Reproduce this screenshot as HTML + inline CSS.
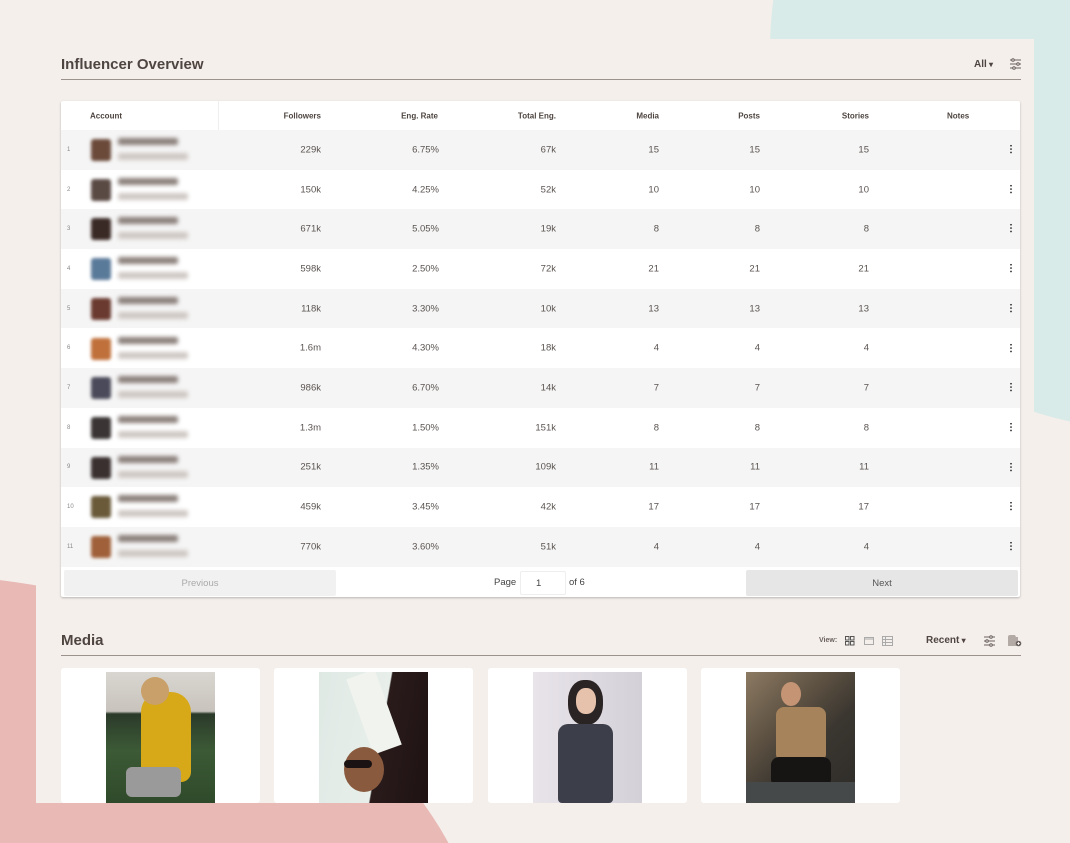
<!DOCTYPE html>
<html style="width:1070px;height:843px;overflow:hidden"><head><meta charset="utf-8"><style>
*{box-sizing:border-box;margin:0;padding:0}
body{width:1070px;height:843px;overflow:hidden;position:relative;background:#f4efeb;font-family:"Liberation Sans",sans-serif;color:#4a4340}
.bg{position:absolute;left:0;top:0;width:1070px;height:843px;overflow:hidden}
.teal{position:absolute;left:770px;top:-330px;width:760px;height:760px;border-radius:50%;background:#d9ebe8}
.pink{position:absolute;left:-690px;top:574px;width:1180px;height:852px;border-radius:50%;background:#e8b9b5}
.panel{position:absolute;left:36px;top:39px;width:998px;height:764px;background:#f4efeb}
h2{position:absolute;font-size:15px;font-weight:bold;color:#4e4541}
.rule{position:absolute;height:1px;background:#9b928d}
.table{position:absolute;left:61px;top:101px;width:959px;height:496px;background:#fff;box-shadow:0 1px 2px rgba(0,0,0,.25);border-radius:2px;overflow:hidden}
.hdr{position:absolute;top:0;left:0;width:959px;height:29px;font-size:8px;font-weight:bold;color:#4e4541}
.hdr span,.row span{position:absolute;top:50%;transform:translateY(-50%)}
.row{position:absolute;left:0;width:959px;height:39.7px;font-size:9.5px;color:#5a5350}
.row.g{background:#f5f5f5}
.r{text-align:right}
.num{font-size:6px;color:#888;left:6px}
.av{position:absolute;left:30px;top:9px;width:20px;height:22px;border-radius:3px;filter:blur(1.5px)}
.nm{position:absolute;left:57px;top:8px;width:60px;height:7px;background:#8a7f7a;filter:blur(2px);border-radius:2px}
.sb{position:absolute;left:57px;top:23px;width:70px;height:7px;background:#cfc8c4;filter:blur(2px);border-radius:2px}
.dots{position:absolute;left:949px;top:14px;width:2px;height:10px;background:radial-gradient(circle,#555 0.9px,transparent 1px) 0 0/2px 3.4px}
.pag{position:absolute;top:467px;left:0;width:959px;height:29px;font-size:9.5px}
.btn{position:absolute;top:2px;height:26px;border-radius:2px;display:flex;align-items:center;justify-content:center}
.card{position:absolute;top:668px;width:199px;height:135px;background:#fff;border-radius:3px;overflow:hidden}
.img{position:absolute;left:45px;top:4px;width:109px;height:131px;overflow:hidden}
</style></head><body>
<div class="bg"><div class="teal"></div><div class="pink"></div></div>
<div class="panel"></div>
<h2 style="left:61px;top:56px">Influencer Overview</h2>
<div style="position:absolute;left:974px;top:59px;font-size:10px;font-weight:bold;color:#4e4541">All<span style="font-size:8px"> ▾</span></div>
<svg style="position:absolute;left:1009px;top:58px" width="13" height="12" viewBox="0 0 13 12" stroke="#6a615d" fill="none"><path d="M1 2h11M1 6h11M1 10h11"/><circle cx="4" cy="2" r="1.3" fill="#f4efeb"/><circle cx="9" cy="6" r="1.3" fill="#f4efeb"/><circle cx="5" cy="10" r="1.3" fill="#f4efeb"/></svg>
<div class="rule" style="left:61px;top:79px;width:960px"></div>
<div class="table">
<div class="hdr"><span style="left:29px">Account</span><span style="left:157px;top:0;height:29px;width:1px;background:#eee;transform:none"></span>
<span class="r" style="right:699px">Followers</span><span class="r" style="right:582px">Eng. Rate</span><span class="r" style="right:464px">Total Eng.</span><span class="r" style="right:361px">Media</span><span class="r" style="right:260px">Posts</span><span class="r" style="right:151px">Stories</span><span style="left:886px">Notes</span></div>
<div id="rows"></div>
<div class="pag"><div class="btn" style="left:3px;width:272px;background:#f1f1f1;color:#aaa">Previous</div>
<span style="position:absolute;left:433px;top:9px;color:#444">Page</span>
<div style="position:absolute;left:459px;top:3px;width:46px;height:24px;border:1px solid #eee;border-radius:2px;font-size:9.5px;padding:6px 0 0 15px;color:#444">1</div>
<span style="position:absolute;left:508px;top:9px;color:#444">of 6</span>
<div class="btn" style="left:685px;width:272px;background:#e6e6e6;color:#555">Next</div></div>
</div>
<h2 style="left:61px;top:632px">Media</h2>
<div style="position:absolute;left:819px;top:637px;font-size:7px;font-weight:bold;color:#6a615d">View:</div>
<svg style="position:absolute;left:845px;top:636px" width="50" height="10" viewBox="0 0 50 10" fill="none"><g stroke="#555"><rect x="0.5" y="0.5" width="3.5" height="3.5"/><rect x="5.5" y="0.5" width="3.5" height="3.5"/><rect x="0.5" y="5.5" width="3.5" height="3.5"/><rect x="5.5" y="5.5" width="3.5" height="3.5"/></g><g stroke="#aaa"><rect x="19.5" y="1.5" width="9" height="7"/><path d="M19 3h10"/><rect x="37.5" y="0.5" width="10" height="9"/><path d="M37.5 3.5h10M37.5 6.5h10M40.5 0.5v9"/></g></svg>
<div style="position:absolute;left:926px;top:635px;font-size:10px;font-weight:bold;color:#4e4541">Recent<span style="font-size:8px"> ▾</span></div>
<svg style="position:absolute;left:983px;top:635px" width="13" height="12" viewBox="0 0 13 12" stroke="#6a615d" fill="none"><path d="M1 2h11M1 6h11M1 10h11"/><circle cx="8" cy="2" r="1.3" fill="#f4efeb"/><circle cx="4" cy="6" r="1.3" fill="#f4efeb"/><circle cx="8" cy="10" r="1.3" fill="#f4efeb"/></svg>
<svg style="position:absolute;left:1007px;top:634px" width="15" height="13" viewBox="0 0 15 13"><path d="M1 3q0-2 2-2h5l1 2h2v9H1z" fill="#b3aaa5"/><circle cx="11.5" cy="9.5" r="2.8" fill="#6a615d"/><path d="M10 9.5h3M11.5 8v3" stroke="#fff" stroke-width=".8"/></svg>
<div class="rule" style="left:61px;top:655px;width:960px"></div>
<div class="card" style="left:61px"><div class="img" style="background:linear-gradient(#d9d6d1 0,#c8c3bc 30%,#2b3a2a 32%,#3c5a36 60%,#2f4a2a 100%)"><div style="position:absolute;left:35px;top:20px;width:50px;height:90px;background:#d7a918;border-radius:20px 20px 10px 10px"></div><div style="position:absolute;left:35px;top:5px;width:28px;height:28px;border-radius:50%;background:#c9a06a"></div><div style="position:absolute;left:20px;top:95px;width:55px;height:30px;background:#9a9a9a;border-radius:6px"></div></div></div>
<div class="card" style="left:274px"><div class="img" style="background:linear-gradient(100deg,#dfe9e4 0,#e8efeb 55%,#2a1b1b 56%,#1e1212 100%)"><div style="position:absolute;left:40px;top:0;width:30px;height:80px;background:#f0f3ee;transform:rotate(-20deg)"></div><div style="position:absolute;left:25px;top:75px;width:40px;height:45px;border-radius:50%;background:#8a5a3e"></div><div style="position:absolute;left:25px;top:88px;width:28px;height:8px;background:#1b1313;border-radius:4px"></div></div></div>
<div class="card" style="left:488px"><div class="img" style="background:linear-gradient(90deg,#e8e4ea,#d4d0d8)"><div style="position:absolute;left:35px;top:8px;width:35px;height:45px;border-radius:45%;background:#2a2424"></div><div style="position:absolute;left:43px;top:16px;width:20px;height:26px;border-radius:45%;background:#e6c2ad"></div><div style="position:absolute;left:25px;top:52px;width:55px;height:79px;background:#3c3f4a;border-radius:10px 10px 4px 4px"></div></div></div>
<div class="card" style="left:701px"><div class="img" style="background:linear-gradient(135deg,#8c7a63 0,#5d5142 35%,#3a3630 60%,#2e2c29 100%)"><div style="position:absolute;left:35px;top:10px;width:20px;height:24px;border-radius:50%;background:#c49474"></div><div style="position:absolute;left:30px;top:35px;width:50px;height:55px;background:#a7835c;border-radius:8px"></div><div style="position:absolute;left:25px;top:85px;width:60px;height:30px;background:#161514;border-radius:8px"></div><div style="position:absolute;left:0;top:110px;width:109px;height:21px;background:#46494a"></div></div></div>
<script>
var d=[["229k","6.75%","67k",15],["150k","4.25%","52k",10],["671k","5.05%","19k",8],["598k","2.50%","72k",21],["118k","3.30%","10k",13],["1.6m","4.30%","18k",4],["986k","6.70%","14k",7],["1.3m","1.50%","151k",8],["251k","1.35%","109k",11],["459k","3.45%","42k",17],["770k","3.60%","51k",4]];
var cols=["#6b4a3a","#5a4a44","#3a2a26","#5a7a9a","#6a3a30","#c0703a","#4a4a5a","#3a3434","#3a3030","#6a5a3a","#a0603a"];
var h="";d.forEach(function(r,i){h+='<div class="row'+(i%2==0?' g':'')+'" style="top:'+(29+i*39.7)+'px"><span class="num">'+(i+1)+'</span><div class="av" style="background:'+cols[i]+'"></div><div class="nm"></div><div class="sb"></div><span class="r" style="right:699px">'+r[0]+'</span><span class="r" style="right:581px">'+r[1]+'</span><span class="r" style="right:464px">'+r[2]+'</span><span class="r" style="right:361px">'+r[3]+'</span><span class="r" style="right:260px">'+r[3]+'</span><span class="r" style="right:151px">'+r[3]+'</span><div class="dots"></div></div>'});
document.getElementById("rows").innerHTML=h;
</script>
</body></html>
